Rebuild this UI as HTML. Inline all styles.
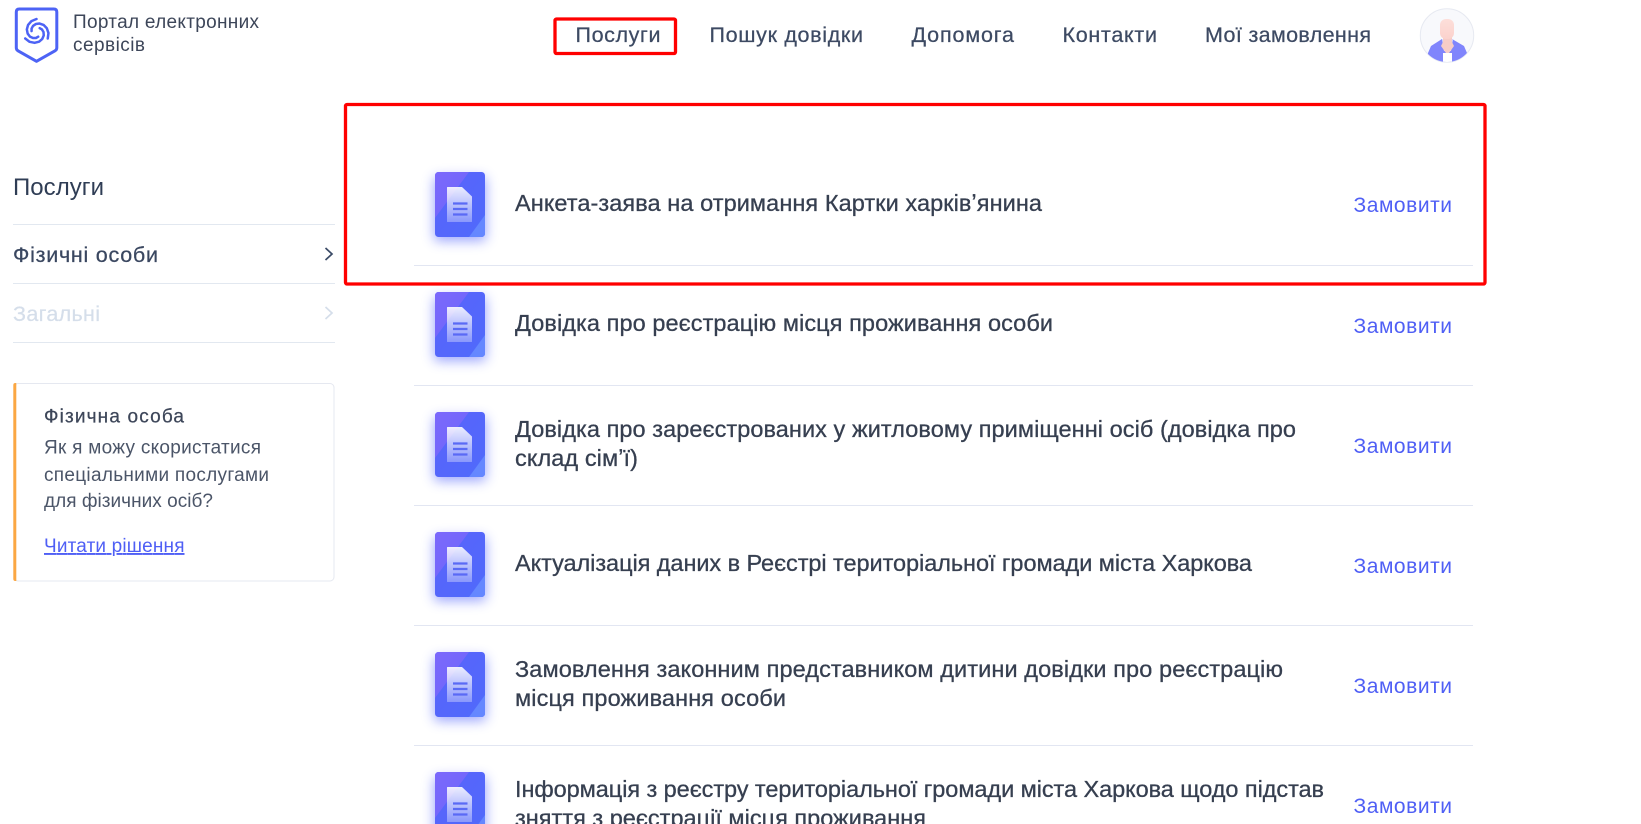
<!DOCTYPE html>
<html lang="uk">
<head>
<meta charset="utf-8">
<title>Портал електронних сервісів</title>
<style>
html,body{margin:0;padding:0;background:#fff;width:1641px;height:824px;overflow:hidden}
svg{display:block}
text{font-family:"Liberation Sans","DejaVu Sans",sans-serif;white-space:pre}
.nav{font-size:21.500px;fill:#3d4a63;stroke:#3d4a63;stroke-width:.25px}
.row{font-size:23.500px;fill:#363f50;stroke:#363f50;stroke-width:.3px}
.order{font-size:21px;fill:#4f5ff5}
.body{font-size:19px;fill:#4b5568}
</style>
</head>
<body>
<svg xmlns="http://www.w3.org/2000/svg" width="1641" height="824" viewBox="0 0 1641 824">
<defs>
<linearGradient id="doc" x1="0" y1="0" x2="0" y2="1"><stop offset="0" stop-color="#fff" stop-opacity=".88"/><stop offset="1" stop-color="#fff" stop-opacity=".32"/></linearGradient>
<linearGradient id="bg" x1="0" y1="0" x2="1" y2="1"><stop offset="0" stop-color="#5a63fb"/><stop offset="1" stop-color="#4f6afb"/></linearGradient>
<linearGradient id="band" x1="0" y1="0" x2="1" y2="1"><stop offset="0" stop-color="#7c68fb"/><stop offset="1" stop-color="#6c66fb"/></linearGradient>
<linearGradient id="head" x1="0" y1="0" x2="0" y2="1"><stop offset="0" stop-color="#fddfda"/><stop offset="1" stop-color="#fbd2cd"/></linearGradient>
<filter id="blur" x="-50%" y="-50%" width="200%" height="200%"><feGaussianBlur stdDeviation="6"/></filter>
<clipPath id="ic"><rect width="50" height="65" rx="3.500"/></clipPath>
<clipPath id="av"><circle cx="1447" cy="35.500" r="26.500"/></clipPath>
<symbol id="file" overflow="visible">
<rect x="-1" y="5" width="52" height="64" rx="4" fill="#5b6cfb" opacity=".6" filter="url(#blur)"/>
<g clip-path="url(#ic)">
<rect width="50" height="65" fill="url(#bg)"/>
<polygon points="0,0 34,0 0,46" fill="url(#band)"/>
<polygon points="50,43 50,65 34,65" fill="#6487ff"/>
</g>
<path d="M12 15.500q0-.5.500-.5h14.500l10 9.500v25q0 .5-.5.500h-24q-.5 0-.5-.5z" fill="url(#doc)"/>
<path d="M18 31.500h14.500M18 37h14.500M18 42.500h14.500" stroke="#5a6af5" stroke-width="2.300" fill="none"/>
</symbol>
<polyline id="arm" points="0,-13 -5.070,-10.880 -8.430,-7.070 -9.660,-2.590 -8.860,1.560 -6.550,4.590 -3.500,6.060 -.52,5.980 1.710,4.700" fill="none" stroke="#4d63f5" stroke-width="2.500" stroke-linecap="round" stroke-linejoin="round"/>
<path id="chev" d="M0 0l6.500 6-6.500 6" fill="none" stroke-width="1.700"/>
</defs>

<!-- header -->
<path d="M16.300 12q0-3 3-3h34.500q3 0 3 3v35.800q0 2-1.800 3L36.500 61.300 18 50.800q-1.700-1-1.700-3z" fill="none" stroke="#4d63f5" stroke-width="3" stroke-linejoin="round"/>
<g transform="translate(36.500 32)">
<use href="#arm"/><use href="#arm" transform="rotate(120)"/><use href="#arm" transform="rotate(240)"/>
</g>
<text x="73" y="28" font-size="19" fill="#3d4659" textLength="186">Портал електронних</text>
<text x="73" y="51" font-size="19" fill="#3d4659" textLength="72">сервісів</text>

<text class="nav" x="575.500" y="42" textLength="85">Послуги</text>
<text class="nav" x="709.500" y="42" textLength="153.500">Пошук довідки</text>
<text class="nav" x="911.500" y="42" textLength="102.500">Допомога</text>
<text class="nav" x="1062.500" y="42" textLength="94.500">Контакти</text>
<text class="nav" x="1205" y="42" textLength="166">Мої замовлення</text>

<circle cx="1447" cy="35.500" r="26.700" fill="#f8f9fc" stroke="#e6e9f1" stroke-width="1"/>
<g clip-path="url(#av)">
<path d="M1428 53l3-7 11-7 5 6 5-6 12 7 3 7v12h-39z" fill="#8085fc"/>
<path d="M1442 39l2 12h7l2-12-5 3z" fill="#dfe6ff"/>
<rect x="1443" y="53" width="9" height="11" fill="#fff"/>
<path d="M1443 36h9v6l2 4-5 7h-3l-5-7 2-4z" fill="#f6ccc7"/>
</g>
<rect x="1440" y="19" width="14" height="20" rx="6" fill="url(#head)"/>

<!-- sidebar -->
<text x="13" y="195" font-size="24" fill="#2f3d55" textLength="91">Послуги</text>
<rect x="13" y="224" width="322" height="1" fill="#e2e8f0"/>
<text x="13" y="262" font-size="21.500" fill="#3a4760" stroke="#3a4760" stroke-width=".25" textLength="145">Фізичні особи</text>
<use href="#chev" transform="translate(325.500 248)" stroke="#3a4a66"/>
<rect x="13" y="283" width="322" height="1" fill="#e2e8f0"/>
<text x="13" y="321" font-size="21.500" fill="#d5deea" stroke="#d5deea" stroke-width=".25" textLength="87">Загальні</text>
<use href="#chev" transform="translate(325.500 307)" stroke="#d5deea"/>
<rect x="13" y="342" width="322" height="1" fill="#e2e8f0"/>

<rect x="14" y="383.500" width="320" height="197.500" rx="4" fill="#fff" stroke="#e5e8f0"/>
<path d="M16.300 383h-1q-2 0-2 2v194q0 2 2 2h1z" fill="#fba743"/>
<text x="44" y="422.500" font-size="19" fill="#3d4659" stroke="#3d4659" stroke-width=".25" textLength="140">Фізична особа</text>
<text class="body" x="44" y="453.500" textLength="217">Як я можу скористатися</text>
<text class="body" x="44" y="481" textLength="225">спеціальними послугами</text>
<text class="body" x="44" y="507" textLength="169">для фізичних осіб?</text>
<text x="44" y="552" font-size="19" fill="#4f5ff5" text-decoration="underline" textLength="140.500">Читати рішення</text>

<!-- list -->
<use href="#file" x="435" y="172"/>
<text class="row" x="515" y="211" textLength="527">Анкета-заява на отримання Картки харківʼянина</text>
<text class="order" x="1353.500" y="212" textLength="98.500">Замовити</text>
<rect x="414" y="265" width="1059" height="1" fill="#e2e6f2"/>

<use href="#file" x="435" y="292"/>
<text class="row" x="515" y="331" textLength="538">Довідка про реєстрацію місця проживання особи</text>
<text class="order" x="1353.500" y="333" textLength="98.500">Замовити</text>
<rect x="414" y="385" width="1059" height="1" fill="#e2e6f2"/>

<use href="#file" x="435" y="412"/>
<text class="row" x="515" y="437" textLength="781">Довідка про зареєстрованих у житловому приміщенні осіб (довідка про</text>
<text class="row" x="515" y="466" textLength="123">склад сімʼї)</text>
<text class="order" x="1353.500" y="453" textLength="98.500">Замовити</text>
<rect x="414" y="505" width="1059" height="1" fill="#e2e6f2"/>

<use href="#file" x="435" y="532"/>
<text class="row" x="515" y="571" textLength="737">Актуалізація даних в Реєстрі територіальної громади міста Харкова</text>
<text class="order" x="1353.500" y="573" textLength="98.500">Замовити</text>
<rect x="414" y="625" width="1059" height="1" fill="#e2e6f2"/>

<use href="#file" x="435" y="652"/>
<text class="row" x="515" y="677" textLength="768">Замовлення законним представником дитини довідки про реєстрацію</text>
<text class="row" x="515" y="706" textLength="271">місця проживання особи</text>
<text class="order" x="1353.500" y="693" textLength="98.500">Замовити</text>
<rect x="414" y="745" width="1059" height="1" fill="#e2e6f2"/>

<use href="#file" x="435" y="772"/>
<text class="row" x="515" y="797" textLength="809">Інформація з реєстру територіальної громади міста Харкова щодо підстав</text>
<text class="row" x="515" y="826" textLength="411">зняття з реєстрації місця проживання</text>
<text class="order" x="1353.500" y="813" textLength="98.500">Замовити</text>

<!-- annotations -->
<rect x="555" y="19" width="120.500" height="34.500" rx="1.500" fill="none" stroke="#f00" stroke-width="3.300"/>
<rect x="345.500" y="104.500" width="1139.500" height="179.500" rx="1.500" fill="none" stroke="#f00" stroke-width="3.300"/>
</svg>
</body>
</html>
